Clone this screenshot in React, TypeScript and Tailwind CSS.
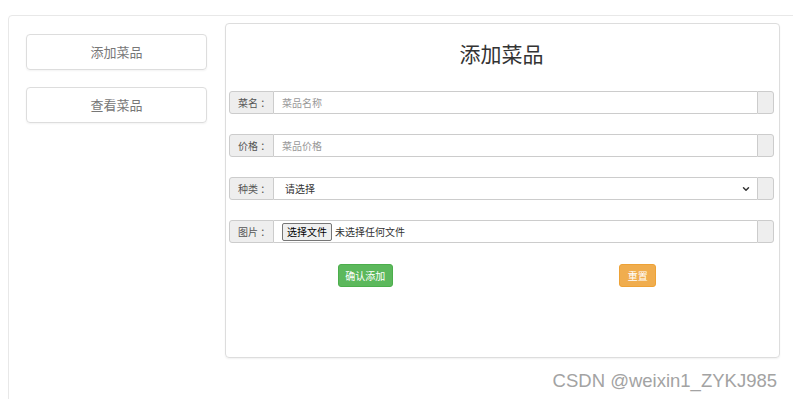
import { ChevronDown } from "lucide-react";

const font = { fontFamily: '"Microsoft YaHei", "Noto Sans CJK SC", "Noto Sans", sans-serif' };

interface RowProps {
  label: string;
  children: React.ReactNode;
}

const FormRow: React.FC<RowProps> = ({ label, children }) => {
  return (
    <div className="flex h-[23px] w-full">
      <div className="w-[45px] shrink-0 flex items-center pl-[8px] bg-[#eeeeee] border border-[#cccccc] rounded-l-[3px] text-[10px] text-[#555555]">
        {label}
      </div>
      <div className="flex-1 flex items-center border-y border-[#cccccc] bg-white px-[8px] text-[10px]">
        {children}
      </div>
      <div className="w-[17px] shrink-0 bg-[#eeeeee] border border-[#cccccc] rounded-r-[3px]"></div>
    </div>
  );
};

export default function App() {
  return (
    <div className="relative w-[793px] h-[399px] overflow-hidden bg-white" style={font}>
      <div className="ml-[8px] mt-[15px] w-[820px] h-[420px] border border-[#e8e8e8] rounded-[4px] flex items-start pl-[17px] pt-[7px]">
        <div className="w-[181px] mt-[11px] flex flex-col gap-[17px]">
          <div className="h-[36px] flex items-center justify-center border border-[#dddddd] rounded-[4px] shadow-[0_1px_2px_rgba(0,0,0,0.05)] text-[13px] text-[#777777]">
            添加菜品
          </div>
          <div className="h-[36px] flex items-center justify-center border border-[#dddddd] rounded-[4px] shadow-[0_1px_2px_rgba(0,0,0,0.05)] text-[13px] text-[#777777]">
            查看菜品
          </div>
        </div>

        <div className="ml-[18px] w-[555px] h-[335px] border border-[#dddddd] rounded-[4px] shadow-[0_1px_2px_rgba(0,0,0,0.06)] pl-[3px] pr-[5px]">
          <h1 className="mt-[14px] h-[30px] leading-[30px] text-center text-[21px] text-[#333333]">添加菜品</h1>

          <div className="mt-[23px] flex flex-col gap-[20px]">
            <FormRow label="菜名 ：">
              <span className="text-[#999999]">菜品名称</span>
            </FormRow>
            <FormRow label="价格 ：">
              <span className="text-[#999999]">菜品价格</span>
            </FormRow>
            <FormRow label="种类 ：">
              <div className="flex-1 flex items-center justify-between text-[#333333]">
                <span className="pl-[3px]">请选择</span>
                <ChevronDown size={10} strokeWidth={3.5} className="text-[#333333] mr-[-2px]" />
              </div>
            </FormRow>
            <FormRow label="图片 ：">
              <div className="flex items-center gap-[3px] text-[#333333]">
                <span className="h-[18px] px-[4px] flex items-center border border-[#767676] rounded-[2px] bg-[#efefef] text-black">
                  选择文件
                </span>
                <span>未选择任何文件</span>
              </div>
            </FormRow>
          </div>

          <div className="mt-[21px] flex">
            <div className="flex-1 flex justify-center">
              <button className="h-[23px] w-[55px] bg-[#5cb85c] border border-[#4cae4c] rounded-[3px] text-white text-[10px]">
                确认添加
              </button>
            </div>
            <div className="flex-1 flex justify-center">
              <button className="h-[23px] w-[37px] bg-[#f0ad4e] border border-[#eea236] rounded-[3px] text-white text-[10px]">
                重置
              </button>
            </div>
          </div>
        </div>
      </div>

      <div
        className="absolute right-[16px] top-[367px] text-[18.5px] text-[#a3a3a3]"
        style={{ fontFamily: '"Liberation Sans", Arial, sans-serif' }}
      >
        CSDN @weixin1_ZYKJ985
      </div>
    </div>
  );
}
